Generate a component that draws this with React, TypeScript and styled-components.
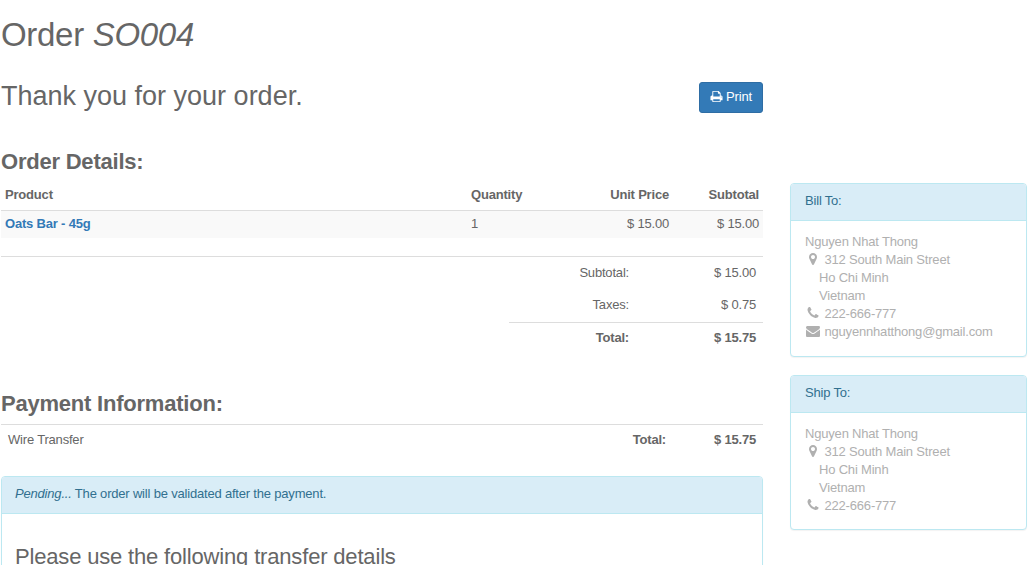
import React from 'react';
import styled, { createGlobalStyle, css } from 'styled-components';

const GlobalStyle = createGlobalStyle`
  *, *::before, *::after { box-sizing: border-box; }
  html, body { height: 100%; }
  body {
    margin: 0;
    overflow: hidden;
    background: #fff;
    color: #666;
    font-family: "Liberation Sans", Arial, Helvetica, sans-serif;
    font-size: 13px;
    line-height: 18px;
    letter-spacing: -0.19px;
  }
`;

const Page = styled.div`
  display: grid;
  grid-template-columns: 762px 237px;
  column-gap: 27px;
  align-items: start;
  height: 565px;
  overflow: hidden;
  padding-left: 1px;
`;

const Main = styled.main`
  display: flex;
  flex-direction: column;
`;

const Sidebar = styled.aside`
  display: flex;
  flex-direction: column;
  gap: 18px;
  padding-top: 183px;
`;

const Title = styled.h1`
  margin: 16px 0 0;
  font-size: 33px;
  font-weight: 400;
  line-height: 38px;
  letter-spacing: -0.3px;
`;

const ThanksRow = styled.div`
  display: flex;
  justify-content: space-between;
  align-items: flex-start;
  margin-top: 27px;
  height: 69px;
`;

const Thanks = styled.h2`
  margin: 0;
  font-size: 27px;
  font-weight: 400;
  line-height: 30px;
  letter-spacing: 0;
`;

const PrintButton = styled.button`
  display: flex;
  align-items: center;
  justify-content: center;
  gap: 3px;
  width: 64px;
  height: 31px;
  margin-top: 1px;
  padding: 0 0 2px;
  border: 1px solid #2e6da4;
  border-radius: 3px;
  background: #337ab7;
  color: #fff;
  font: inherit;
  letter-spacing: inherit;
`;

const SectionTitle = styled.h3<{ $bold?: boolean }>`
  margin: 0;
  font-size: 22px;
  line-height: 24px;
  font-weight: ${(p) => (p.$bold ? 700 : 400)};
  letter-spacing: ${(p) => (p.$bold ? '-0.22px' : '-0.17px')};
`;

const Table = styled.table`
  width: 100%;
  margin-top: 7px;
  border-collapse: separate;
  border-spacing: 0;
  table-layout: fixed;
`;

const cell = css<{ $right?: boolean }>`
  line-height: 18px;
  text-align: ${(p) => (p.$right ? 'right' : 'left')};
  vertical-align: top;
`;

const HeadCell = styled.th<{ $right?: boolean }>`
  ${cell}
  height: 30px;
  padding: 5px 4px 0;
  border-bottom: 1px solid #ddd;
`;

const Cell = styled.td<{ $right?: boolean }>`
  ${cell}
  height: 27px;
  padding: 4px 4px 0;
  background: #f9f9f9;
`;

const ProductLink = styled.a`
  color: #337ab7;
  font-weight: 700;
  text-decoration: none;
`;

const Totals = styled.div`
  display: flex;
  justify-content: flex-end;
  margin-top: 18px;
  border-top: 1px solid #ddd;
`;

const TotalsList = styled.div`
  width: 254px;
`;

const TotalLine = styled.div<{ $strong?: boolean }>`
  display: grid;
  grid-template-columns: 120px 1fr;
  height: ${(p) => (p.$strong ? '34px' : '32px')};
  padding: ${(p) => (p.$strong ? '6px' : '7px')} 7px 0 0;
  text-align: right;
  font-weight: ${(p) => (p.$strong ? 700 : 400)};
  border-top: ${(p) => (p.$strong ? '1px solid #ddd' : '0')};

  &:last-child {
    margin-top: 1px;
  }
`;

const Payment = styled.section`
  margin-top: 36px;
`;

const PaymentRow = styled.div`
  display: grid;
  grid-template-columns: 1fr 100px 90px;
  height: 52px;
  margin-top: 8px;
  padding: 6px 7px 0;
  border-top: 1px solid #ddd;
`;

const Amount = styled.strong`
  text-align: right;
`;

const Panel = styled.section<{ $height: number }>`
  height: ${(p) => p.$height}px;
  border: 1px solid #bce8f1;
  border-radius: 4px;
  background: #fff;
  box-shadow: 0 1px 1px rgba(0, 0, 0, 0.05);
`;

const PanelHead = styled.header<{ $inset?: number }>`
  height: 37px;
  padding: 8px ${(p) => p.$inset ?? 14}px 0;
  border-bottom: 1px solid #bce8f1;
  border-radius: 3px 3px 0 0;
  background: #d9edf7;
  color: #31708f;
`;

const TransferBody = styled.div`
  padding: 31px 13px 0;
`;

const Address = styled.address`
  padding: 12px 14px 0;
  color: #b0b0b0;
  font-style: normal;
`;

const AddressLine = styled.div<{ $indent?: boolean }>`
  display: flex;
  gap: 3px;
  height: 18px;
  padding-left: ${(p) => (p.$indent ? '14px' : '0')};
  white-space: nowrap;
`;

const IconSlot = styled.span`
  display: flex;
  justify-content: center;
  align-items: center;
  width: 16.5px;
  height: 16px;
`;

const icons = {
  print:
    'M448 1536h896v-256h-896v256zm0-640h896v-384h-160q-40 0-68-28t-28-68v-160h-640v640zm1152 64q0-26-19-45t-45-19-45 19-19 45 19 45 45 19 45-19 19-45zm128 0v416q0 13-9.5 22.5t-22.5 9.5h-224v160q0 40-28 68t-68 28h-960q-40 0-68-28t-28-68v-160h-224q-13 0-22.5-9.5t-9.5-22.5v-416q0-79 56.5-135.5t135.5-56.5h64v-544q0-40 28-68t68-28h672q40 0 88 20t76 48l152 152q28 28 48 76t20 88v256h64q79 0 135.5 56.5t56.5 135.5z',
  marker:
    'M1152 640q0-106-75-181t-181-75-181 75-75 181 75 181 181 75 181-75 75-181zm256 0q0 109-33 179l-364 774q-16 33-47.5 52t-67.5 19-67.5-19-46.5-52l-365-774q-33-70-33-179 0-212 150-362t362-150 362 150 150 362z',
  phone:
    'M1600 1240q0 27-10 70.5t-21 68.5q-21 50-122 106-94 51-186 51-27 0-53-3.5t-57.5-12.5-47-14.5-55.5-20.5-49-18q-98-35-175-83-127-79-264-216t-216-264q-48-77-83-175-3-9-18-49t-20.5-55.5-14.5-47-12.5-57.5-3.5-53q0-92 51-186 56-101 106-122 25-11 68.5-21t70.5-10q14 0 21 3 18 6 53 76 11 19 30 54t35 63.5 31 53.5q3 4 17.5 25t21.5 35.5 7 28.5q0 20-28.5 50t-62 55-62 53-28.5 46q0 9 5 22.5t8.5 20.5 14 24 11.5 19q76 137 174 235t235 174q2 1 19 11.5t24 14 20.5 8.5 22.5 5q18 0 46-28.5t53-62 55-62 50-28.5q14 0 28.5 7t35.5 21.5 25 17.5q25 15 53.5 31t63.5 35 54 30q70 35 76 53 3 7 3 21z',
  envelope:
    'M1792 710v794q0 66-47 113t-113 47h-1472q-66 0-113-47t-47-113v-794q44 49 101 87 362 246 497 345 57 42 92.5 65.5t94.5 48 110 24.5h2q51 0 110-24.5t94.5-48 92.5-65.5q170-123 498-345 57-39 100-87zm0-294q0 79-49 151t-122 123q-376 261-468 325-10 7-42.5 31t-54 38.5-52 32.5-57.5 27-50 9h-2q-23 0-50-9t-57.5-27-52-32.5-54-38.5-42.5-31q-91-64-262-182.5t-205-142.5q-62-42-117-115.5t-55-136.5q0-78 41.5-130t118.5-52h1472q65 0 112.5 47t47.5 113z',
};

const Icon = ({ name, size = 14 }: { name: keyof typeof icons; size?: number }) => (
  <svg width={size} height={size} viewBox="0 0 1792 1792" fill="currentColor" aria-hidden="true">
    <path d={icons[name]} />
  </svg>
);

interface ContactProps {
  title: string;
  height: number;
  email?: string;
}

const ContactPanel = ({ title, height, email }: ContactProps) => (
  <Panel $height={height}>
    <PanelHead>{title}</PanelHead>
    <Address>
      <AddressLine>Nguyen Nhat Thong</AddressLine>
      <AddressLine>
        <IconSlot><Icon name="marker" /></IconSlot>
        <span>312 South Main Street</span>
      </AddressLine>
      <AddressLine $indent>Ho Chi Minh</AddressLine>
      <AddressLine $indent>Vietnam</AddressLine>
      <AddressLine>
        <IconSlot><Icon name="phone" /></IconSlot>
        <span>222-666-777</span>
      </AddressLine>
      {email && (
        <AddressLine>
          <IconSlot><Icon name="envelope" /></IconSlot>
          <span>{email}</span>
        </AddressLine>
      )}
    </Address>
  </Panel>
);

export default function App() {
  return (
    <>
      <GlobalStyle />
      <Page>
        <Main>
          <Title>Order <em>SO004</em></Title>
          <ThanksRow>
            <Thanks>Thank you for your order.</Thanks>
            <PrintButton><Icon name="print" size={13} /><span>Print</span></PrintButton>
          </ThanksRow>
          <SectionTitle $bold>Order Details:</SectionTitle>
          <Table>
            <colgroup>
              <col width={466} />
              <col width={106} />
              <col width={100} />
              <col width={90} />
            </colgroup>
            <thead>
              <tr>
                <HeadCell>Product</HeadCell>
                <HeadCell>Quantity</HeadCell>
                <HeadCell $right>Unit Price</HeadCell>
                <HeadCell $right>Subtotal</HeadCell>
              </tr>
            </thead>
            <tbody>
              <tr>
                <Cell><ProductLink href="#">Oats Bar - 45g</ProductLink></Cell>
                <Cell>1</Cell>
                <Cell $right>$ 15.00</Cell>
                <Cell $right>$ 15.00</Cell>
              </tr>
            </tbody>
          </Table>
          <Totals>
            <TotalsList>
              <TotalLine><span>Subtotal:</span><span>$ 15.00</span></TotalLine>
              <TotalLine><span>Taxes:</span><span>$ 0.75</span></TotalLine>
              <TotalLine $strong><span>Total:</span><span>$ 15.75</span></TotalLine>
            </TotalsList>
          </Totals>
          <Payment>
            <SectionTitle $bold>Payment Information:</SectionTitle>
            <PaymentRow>
              <span>Wire Transfer</span>
              <Amount>Total:</Amount>
              <Amount>$ 15.75</Amount>
            </PaymentRow>
          </Payment>
          <Panel $height={200}>
            <PanelHead $inset={13}><em>Pending...</em> The order will be validated after the payment.</PanelHead>
            <TransferBody>
              <SectionTitle>Please use the following transfer details</SectionTitle>
            </TransferBody>
          </Panel>
        </Main>
        <Sidebar>
          <ContactPanel title="Bill To:" height={174} email="nguyennhatthong@gmail.com" />
          <ContactPanel title="Ship To:" height={155} />
        </Sidebar>
      </Page>
    </>
  );
}
